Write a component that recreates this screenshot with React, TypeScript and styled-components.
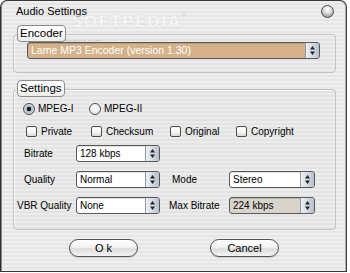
import styled, { createGlobalStyle } from "styled-components";

const GlobalStyle = createGlobalStyle`
  html, body {
    margin: 0;
    padding: 0;
    background: #ffffff;
  }
  body {
    font-family: "Liberation Sans", Arial, sans-serif;
    font-size: 11px;
    color: #000;
  }
`;

const stripes = "repeating-linear-gradient(180deg, #efefef 0px, #efefef 2px, #e6e6e6 2px, #e6e6e6 4px)";

export default function App() {
  return (
    <>
      <GlobalStyle />
      <win.wrap>
        <win.titlebar>
          <win.title>Audio Settings</win.title>
          <win.close />
        </win.titlebar>
        <win.body>
          <group.wrap>
            <group.legend>Encoder</group.legend>
            <group.box $pad="7px 15px 13px 13px">
              <Combo value="Lame MP3 Encoder (version 1.30)" bg="#d6b28a" color="#fff" size={10.5} />
            </group.box>
          </group.wrap>

          <group.wrap $top={7}>
            <group.legend>Settings</group.legend>
            <group.box $pad="12px 0 15px 0">
              <row.radios>
                <Radio label="MPEG-I" checked />
                <Radio label="MPEG-II" />
              </row.radios>
              <row.checks>
                <Check label="Private" />
                <Check label="Checksum" />
                <Check label="Original" />
                <Check label="Copyright" />
              </row.checks>
              <row.fields>
                <field.label $indent={10}>Bitrate</field.label>
                <Combo value="128 kbps" />
                <span />
                <span />
                <field.label $indent={10}>Quality</field.label>
                <Combo value="Normal" />
                <field.label $indent={12}>Mode</field.label>
                <Combo value="Stereo" />
                <field.label $indent={3}>VBR Quality</field.label>
                <Combo value="None" />
                <field.label $indent={9}>Max Bitrate</field.label>
                <Combo value="224 kbps" bg="#d8d4cc" />
              </row.fields>
            </group.box>
          </group.wrap>

          <row.buttons>
            <PushButton>O k</PushButton>
            <PushButton>Cancel</PushButton>
          </row.buttons>
        </win.body>
        <win.mark>
          SOFTPEDIA<sup>™</sup>
        </win.mark>
        <win.markUrl>www.softpedia.com</win.markUrl>
      </win.wrap>
    </>
  );
}

interface ComboProps {
  value: string;
  bg?: string;
  color?: string;
  size?: number;
}
const Combo = ({ value, bg = "#ffffff", color = "#000", size = 10 }: ComboProps) => {
  return (
    <combo.wrap $bg={bg}>
      <combo.text $color={color} $size={size}>
        {value}
      </combo.text>
      <combo.arrow>
        <svg width="7" height="11" viewBox="0 0 7 11">
          <path d="M3.5 1 L6 4.5 L1 4.5 Z" fill="#222" />
          <path d="M3.5 10 L6 6.5 L1 6.5 Z" fill="#222" />
        </svg>
      </combo.arrow>
    </combo.wrap>
  );
};

const Radio = ({ label, checked }: { label: string; checked?: boolean }) => {
  return (
    <opt.wrap>
      <opt.radio $checked={!!checked} />
      <opt.text>{label}</opt.text>
    </opt.wrap>
  );
};

const Check = ({ label }: { label: string }) => {
  return (
    <opt.wrap>
      <opt.check />
      <opt.text>{label}</opt.text>
    </opt.wrap>
  );
};

const win = {
  wrap: styled.div`
    position: relative;
    width: 345px;
    height: 270px;
    border: 1px solid #3a3a3a;
    border-left-color: #2e2e2e;
    border-radius: 7px 7px 0 0;
    background: ${stripes};
    box-shadow: inset 1px 0 0 #8a8a8a, inset -1px 0 0 #b0b0b0;
    overflow: hidden;
  `,
  titlebar: styled.div`
    height: 19px;
    display: flex;
    align-items: center;
    justify-content: space-between;
    padding: 0 12px 0 15px;
  `,
  title: styled.span`
    font-size: 11px;
    color: #000;
    padding-top: 1px;
  `,
  close: styled.div`
    width: 11px;
    height: 11px;
    margin-top: 1px;
    border-radius: 50%;
    border: 1px solid #4a4a4a;
    background: radial-gradient(circle at 50% 30%, #ffffff 0%, #e4e4e4 35%, #a8a8a8 75%, #8c8c8c 100%);
  `,
  body: styled.div`
    padding: 5px 10px 0 12px;
  `,
  mark: styled.div`
    position: absolute;
    left: 70px;
    top: 11px;
    font-family: "DejaVu Sans", sans-serif;
    font-size: 16px;
    font-weight: bold;
    letter-spacing: 1px;
    color: rgba(255, 255, 255, 0.55);
    -webkit-text-stroke: 0.5px rgba(170, 170, 170, 0.3);
    pointer-events: none;

    sup {
      font-size: 6px;
      vertical-align: top;
    }
  `,
  markUrl: styled.div`
    position: absolute;
    left: 40px;
    top: 37px;
    font-size: 7px;
    color: rgba(120, 120, 120, 0.3);
    pointer-events: none;
  `,
};

const group = {
  wrap: styled.div<{ $top?: number }>`
    display: flex;
    flex-direction: column;
    margin-top: ${(p) => p.$top ?? 0}px;
  `,
  legend: styled.div`
    position: relative;
    z-index: 1;
    align-self: flex-start;
    height: 15px;
    line-height: 15px;
    margin-left: 4px;
    padding: 0 2px;
    font-size: 11.5px;
    border: 1px solid #8c8c8c;
    border-radius: 4px;
    background: linear-gradient(180deg, #ffffff 0%, #fafafa 60%, #ececec 100%);
  `,
  box: styled.div<{ $pad: string }>`
    box-sizing: border-box;
    margin-top: -8px;
    width: 323px;
    padding: ${(p) => p.$pad};
    border: 1px solid #c2c2c2;
    border-radius: 4px;
    background: rgba(0, 0, 0, 0.012);
    box-shadow: inset 1px 1px 0 rgba(255, 255, 255, 0.6);
    display: flex;
    flex-direction: column;
  `,
};

const row = {
  radios: styled.div`
    display: grid;
    grid-template-columns: 66px auto;
    padding-left: 9px;
    height: 13px;
    align-items: center;
  `,
  checks: styled.div`
    display: grid;
    grid-template-columns: 65px 79px 66px auto;
    padding-left: 12px;
    margin-top: 10px;
    height: 12px;
    align-items: center;
  `,
  fields: styled.div`
    display: grid;
    grid-template-columns: 62px 84px 69px 86px;
    grid-auto-rows: 17px;
    row-gap: 9px;
    margin-top: 8px;
    align-items: center;
  `,
  buttons: styled.div`
    display: flex;
    gap: 72px;
    padding-left: 56px;
    margin-top: 9px;
  `,
};

const field = {
  label: styled.span<{ $indent: number }>`
    padding-left: ${(p) => p.$indent}px;
    font-size: 10px;
    white-space: nowrap;
  `,
};

const opt = {
  wrap: styled.label`
    display: flex;
    align-items: center;
    gap: 3px;
    white-space: nowrap;
  `,
  radio: styled.span<{ $checked: boolean }>`
    box-sizing: border-box;
    width: 12px;
    height: 12px;
    border-radius: 50%;
    border: 1px solid #4d4d4d;
    background: ${(p) =>
      p.$checked
        ? "radial-gradient(circle at 50% 50%, #1a1a1a 0%, #1a1a1a 28%, #a9b3c0 34%, #dfe4ea 80%, #c2c9d2 100%)"
        : "radial-gradient(circle at 50% 35%, #ffffff 0%, #f4f4f4 50%, #cfcfcf 100%)"};
  `,
  check: styled.span`
    box-sizing: border-box;
    width: 11px;
    height: 11px;
    margin-right: 1px;
    border-radius: 2px;
    border: 1px solid #4d4d4d;
    background: linear-gradient(180deg, #ffffff 0%, #f6f6f6 55%, #dadada 100%);
  `,
  text: styled.span`
    font-size: 10px;
  `,
};

const combo = {
  wrap: styled.div<{ $bg: string }>`
    box-sizing: border-box;
    height: 17px;
    display: flex;
    align-items: stretch;
    border: 1px solid #585858;
    border-radius: 3px;
    background: ${(p) => p.$bg};
    box-shadow: inset 0 1px 0 rgba(0, 0, 0, 0.12);
    overflow: hidden;
  `,
  text: styled.span<{ $color: string; $size: number }>`
    flex: 1;
    padding-left: 3px;
    line-height: 15px;
    font-size: ${(p) => p.$size}px;
    color: ${(p) => p.$color};
    white-space: nowrap;
    overflow: hidden;
  `,
  arrow: styled.span`
    width: 13px;
    display: flex;
    align-items: center;
    justify-content: center;
    border-left: 1px solid #8f98a4;
    background: linear-gradient(90deg, #eef1f5 0%, #d3dae3 50%, #b6c0cc 100%);
  `,
};

const PushButton = styled.button`
  box-sizing: border-box;
  width: 69px;
  height: 18px;
  padding: 0;
  border: 1px solid #555;
  border-radius: 9px;
  font-family: "Liberation Sans", Arial, sans-serif;
  font-size: 11px;
  color: #000;
  background: linear-gradient(180deg, #ffffff 0%, #f2f2f2 45%, #dcdcdc 55%, #f4f4f4 100%);
  box-shadow: 0 1px 1px rgba(0, 0, 0, 0.15);
`;
